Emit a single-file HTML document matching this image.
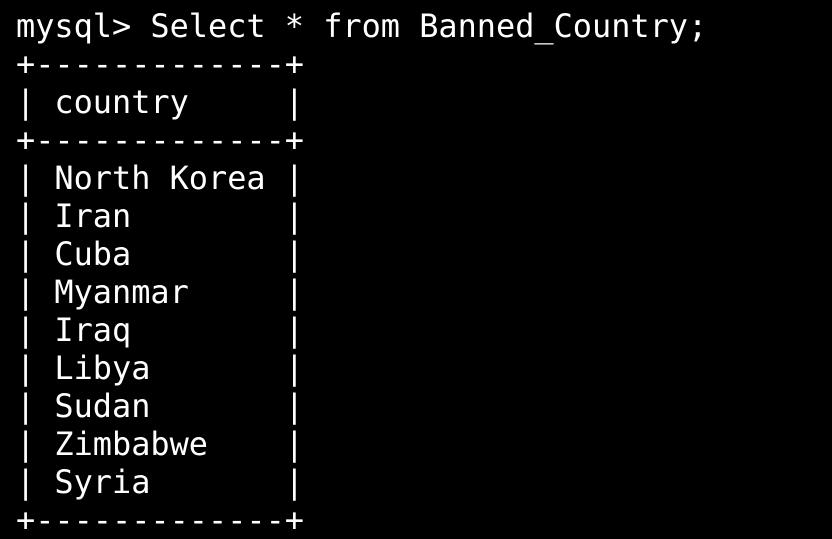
<!DOCTYPE html>
<html><head><meta charset="utf-8"><style>
html,body{margin:0;padding:0;background:#000;width:832px;height:534px;overflow:hidden}
pre{margin:0;position:absolute;left:16px;top:7px;color:#fff;font-family:"DejaVu Sans Mono","Liberation Mono",monospace;font-size:31.9px;line-height:38px}
</style></head><body><pre>mysql&gt; Select * from Banned_Country;
+-------------+
| country     |
+-------------+
| North Korea |
| Iran        |
| Cuba        |
| Myanmar     |
| Iraq        |
| Libya       |
| Sudan       |
| Zimbabwe    |
| Syria       |
+-------------+</pre></body></html>
